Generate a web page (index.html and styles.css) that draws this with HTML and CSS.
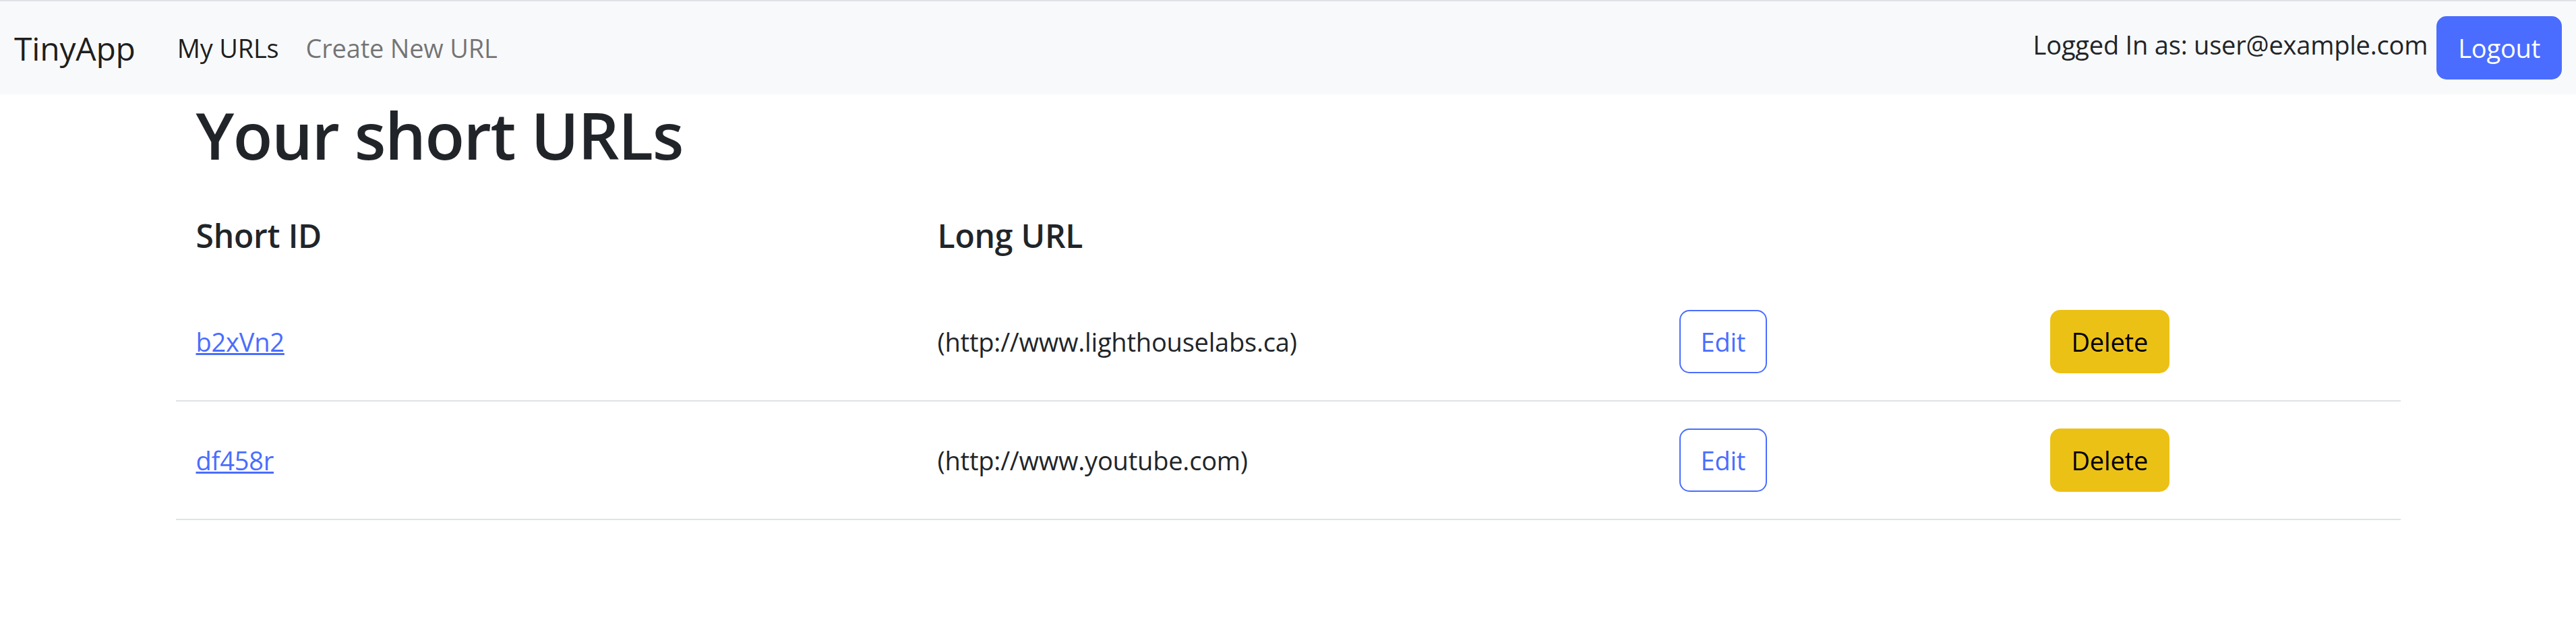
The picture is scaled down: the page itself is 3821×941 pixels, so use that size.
FILE: index.html
```html
<!DOCTYPE html>
<html lang="en">
<head>
<meta charset="utf-8">
<title>TinyApp</title>
<link rel="stylesheet" href="styles.css">
</head>
<body>
<nav class="navbar">
  <a class="brand" href="#">TinyApp</a>
  <ul class="nav-links">
    <li><a class="nav-link active" href="#">My URLs</a></li>
    <li><a class="nav-link" href="#">Create New URL</a></li>
  </ul>
  <div class="user">
    <span class="user-label">Logged In as: user@example.com</span>
    <button class="btn btn-primary" type="button">Logout</button>
  </div>
</nav>
<main class="container">
  <h1 class="title">Your short URLs</h1>
  <table class="url-table">
    <thead>
      <tr>
        <th class="col-id">Short ID</th>
        <th class="col-url">Long URL</th>
        <th class="col-edit"></th>
        <th class="col-del"></th>
      </tr>
    </thead>
    <tbody>
      <tr>
        <td><a class="short-link" href="#">b2xVn2</a></td>
        <td>(http://www.lighthouselabs.ca)</td>
        <td><button class="btn btn-outline" type="button">Edit</button></td>
        <td><button class="btn btn-warning" type="button">Delete</button></td>
      </tr>
      <tr>
        <td><a class="short-link" href="#">df458r</a></td>
        <td>(http://www.youtube.com)</td>
        <td><button class="btn btn-outline" type="button">Edit</button></td>
        <td><button class="btn btn-warning" type="button">Delete</button></td>
      </tr>
    </tbody>
  </table>
</main>
</body>
</html>
```

FILE: styles.css
```css
* {
  box-sizing: border-box;
}

body {
  margin: 0;
  font-family: "Open Sans", "Noto Sans", sans-serif;
  font-size: 38px;
  letter-spacing: -0.2px;
  line-height: 1.5;
  color: #212529;
  background: #ffffff;
}

.navbar {
  display: flex;
  align-items: center;
  height: 140px;
  padding: 0 21px;
  background: #f8f9fa;
  border-top: 2px solid #dee2e6;
}

.brand {
  font-size: 48px;
  line-height: 75px;
  color: rgba(0, 0, 0, 0.9);
  text-decoration: none;
  margin-right: 42px;
}

.nav-links {
  display: flex;
  list-style: none;
  margin: 0;
  padding: 0;
}

.nav-link {
  display: block;
  padding: 0 20px;
  color: rgba(0, 0, 0, 0.55);
  text-decoration: none;
}

.nav-link.active {
  color: rgba(0, 0, 0, 0.9);
}

.user {
  margin-left: auto;
  display: flex;
  align-items: center;
  gap: 13px;
}

.user-label {
  color: #212529;
  margin-bottom: 10px;
}

.btn {
  font-family: inherit;
  font-size: 38px;
  letter-spacing: -0.2px;
  line-height: 60px;
  padding: 15px 30px;
  border: 2px solid transparent;
  border-radius: 15px;
  background: transparent;
  cursor: pointer;
}

.btn-primary {
  background: #4a6dff;
  border-color: #4a6dff;
  color: #ffffff;
}

.btn-outline {
  border-color: #4a6dff;
  color: #4a6dff;
  background: #ffffff;
}

.btn-warning {
  background: #ecc115;
  border-color: #ecc115;
  color: #000000;
}

.container {
  width: 3300px;
  margin: 0 auto;
}

.title {
  font-size: 96px;
  font-weight: 600;
  letter-spacing: -1.5px;
  line-height: 120px;
  margin: 0 0 20px;
  padding-left: 30px;
}

.url-table {
  width: 100%;
  border-collapse: collapse;
  table-layout: fixed;
}

.col-id,
.col-url {
  width: 1100px;
}

.col-edit,
.col-del {
  width: 550px;
}

.url-table th {
  text-align: left;
  font-size: 48px;
  font-weight: 600;
  line-height: 60px;
  padding: 40px 30px;
}

.url-table td {
  padding: 40px 30px;
  border-bottom: 2px solid #dee2e6;
  vertical-align: middle;
  line-height: 60px;
}

.short-link {
  color: #4a6dff;
  text-decoration: underline;
}
```
